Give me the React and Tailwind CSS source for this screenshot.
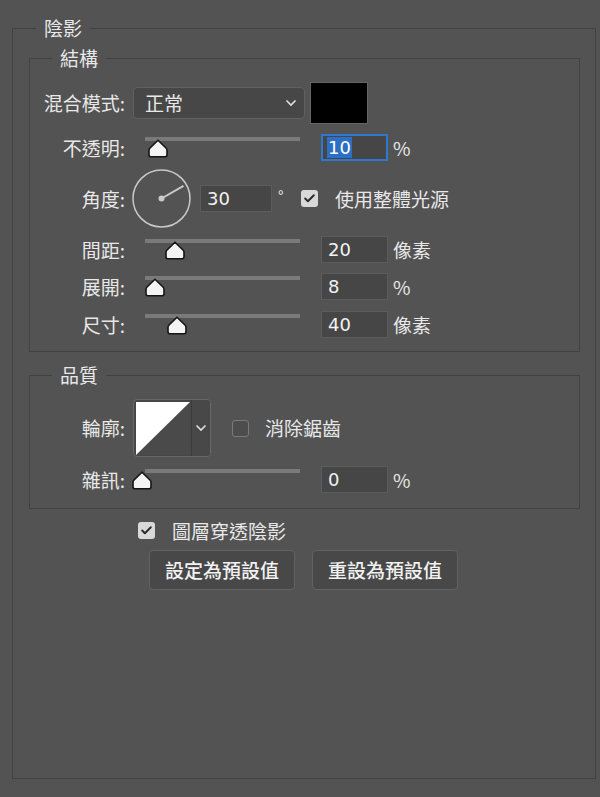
import { Check } from 'lucide-react'

const font = { fontFamily: '"Noto Sans CJK TC", "Noto Sans", sans-serif' }

function Thumb() {
  return (
    <svg width="20" height="19" viewBox="0 0 20 19">
      <path d="M10 1.2 L18.2 9.2 Q19 10 19 11.2 L19 15.8 Q19 17.8 17 17.8 L3 17.8 Q1 17.8 1 15.8 L1 11.2 Q1 10 1.8 9.2 Z"
        fill="#f4f4f4" stroke="#151515" strokeWidth="1.6" strokeLinejoin="round" />
    </svg>
  )
}

function Chevron() {
  return (
    <svg width="12" height="8" viewBox="0 0 12 8">
      <polyline points="1.5,1.5 6,6 10.5,1.5" fill="none" stroke="#e0e0e0" strokeWidth="1.6" />
    </svg>
  )
}

function Slider({ at }) {
  return (
    <div className="relative w-[173px] h-[27px] shrink-0">
      <div className="absolute left-[13px] top-[3px] w-[155px] h-[4px] bg-[#7a7a7a]" />
      <div className="absolute top-[5px]" style={{ left: at }}>
        <Thumb />
      </div>
    </div>
  )
}

function NumBox({ value, w = 'w-[67px]' }) {
  return (
    <div className={`${w} h-[27px] shrink-0 bg-[#464646] border border-[#5c5c5c] flex items-center px-[6px] text-[18px] text-[#f2f2f2]`}
      style={{ fontFamily: '"DejaVu Sans", sans-serif' }}>
      {value}
    </div>
  )
}

function Label({ children }) {
  return <div className="w-[95px] shrink-0 text-right">{children}</div>
}

function SliderRow({ label, at, value, unit, mt }) {
  return (
    <div className={`flex items-center h-[27px] ${mt}`}>
      <Label>{label}</Label>
      <div className="ml-[7px]"><Slider at={at} /></div>
      <div className="ml-[16px]"><NumBox value={value} /></div>
      <div className="ml-[5px]">{unit}</div>
    </div>
  )
}

function CheckBox({ checked }) {
  return checked ? (
    <div className="w-[17px] h-[17px] shrink-0 rounded-[3px] bg-[#d9d9d9] flex items-center justify-center">
      <Check size={13} strokeWidth={3.5} color="#2a2a2a" />
    </div>
  ) : (
    <div className="w-[17px] h-[17px] shrink-0 rounded-[3px] border-[1.5px] border-[#7a7a7a] bg-[#4d4d4d]" />
  )
}

export default function App() {
  return (
    <div className="w-[600px] h-[797px] bg-[#535353] pt-[16px] text-[19px] text-[#e8e8e8] leading-[24px]" style={font}>
      <fieldset className="ml-[12px] mr-[4px] h-[763px] border border-[#424242]">
        <legend className="ml-[23px] px-[8px] leading-[24px]">陰影</legend>

        <fieldset className="mt-[6px] ml-[16px] mr-[15px] border border-[#424242] pt-[12px] pb-[13px]">
          <legend className="ml-[22px] px-[8px] leading-[24px]">結構</legend>

          <div className="flex items-center h-[42px]">
            <Label>混合模式:</Label>
            <div className="ml-[8px] w-[172px] h-[32px] rounded-[4px] bg-[#474747] border border-[#606060] flex items-center justify-between pl-[11px] pr-[7px]">
              <span>正常</span>
              <Chevron />
            </div>
            <div className="ml-[5px] w-[58px] h-[42px] bg-black border border-[#656565]" />
          </div>

          <div className="flex items-center h-[27px] mt-[10px]">
            <Label>不透明:</Label>
            <div className="ml-[7px]"><Slider at={16} /></div>
            <div className="ml-[16px] w-[67px] h-[27px] bg-[#464646] border-2 border-[#2f78cf] flex items-center pl-[4px] text-[18px]"
              style={{ fontFamily: '"DejaVu Sans", sans-serif' }}>
              <span className="bg-[#2c6fc4] text-white px-[1px] leading-[21px]">10</span>
            </div>
            <div className="ml-[5px]">%</div>
          </div>

          <div className="flex items-center h-[59px] mt-[8px]">
            <Label>角度:</Label>
            <svg className="ml-[7px] shrink-0" width="59" height="59" viewBox="0 0 59 59">
              <circle cx="29.5" cy="29.5" r="28.5" fill="none" stroke="#c9c9c9" strokeWidth="1.5" />
              <line x1="29.5" y1="29.5" x2="51.5" y2="16.8" stroke="#c9c9c9" strokeWidth="2" />
              <circle cx="29.5" cy="29.5" r="3" fill="#c9c9c9" />
            </svg>
            <div className="ml-[9px]"><NumBox value="30" w="w-[72px]" /></div>
            <div className="ml-[6px] w-[17px] text-[15px] -mt-[6px]">°</div>
            <div className="ml-[6px]"><CheckBox checked /></div>
            <div className="ml-[17px]">使用整體光源</div>
          </div>

          <SliderRow label="間距:" at={33} value="20" unit="像素" mt="mt-[8px]" />
          <SliderRow label="展開:" at={13} value="8" unit="%" mt="mt-[10px]" />
          <SliderRow label="尺寸:" at={35} value="40" unit="像素" mt="mt-[11px]" />
        </fieldset>

        <fieldset className="mt-[11px] ml-[16px] mr-[15px] border border-[#424242] pt-[12px] pb-[15px]">
          <legend className="ml-[22px] px-[8px] leading-[24px]">品質</legend>

          <div className="flex items-center h-[58px]">
            <Label>輪廓:</Label>
            <div className="ml-[8px] w-[78px] h-[58px] rounded-[4px] border border-[#686868] bg-[#474747] flex overflow-hidden">
              <svg className="shrink-0" width="57" height="56" viewBox="0 0 57 56">
                <rect x="2" y="2" width="54" height="53" fill="#4a4a4a" />
                <polygon points="2,2 56,2 2,55" fill="#ffffff" />
              </svg>
              <div className="flex-1 border-l border-[#3c3c3c] bg-[#484848] flex items-center justify-center">
                <Chevron />
              </div>
            </div>
            <div className="ml-[21px]"><CheckBox /></div>
            <div className="ml-[16px]">消除鋸齒</div>
          </div>

          <SliderRow label="雜訊:" at={0} value="0" unit="%" mt="mt-[9px]" />
        </fieldset>

        <div className="flex items-center h-[17px] mt-[13px] ml-[125px]">
          <CheckBox checked />
          <div className="ml-[17px]">圖層穿透陰影</div>
        </div>

        <div className="flex gap-[17px] mt-[11px] ml-[136px]">
          <button className="w-[146px] h-[40px] rounded-[4px] bg-[#484848] border border-[#626262] text-[#f2f2f2] font-medium">設定為預設值</button>
          <button className="w-[146px] h-[40px] rounded-[4px] bg-[#484848] border border-[#626262] text-[#f2f2f2] font-medium">重設為預設值</button>
        </div>
      </fieldset>
    </div>
  )
}
